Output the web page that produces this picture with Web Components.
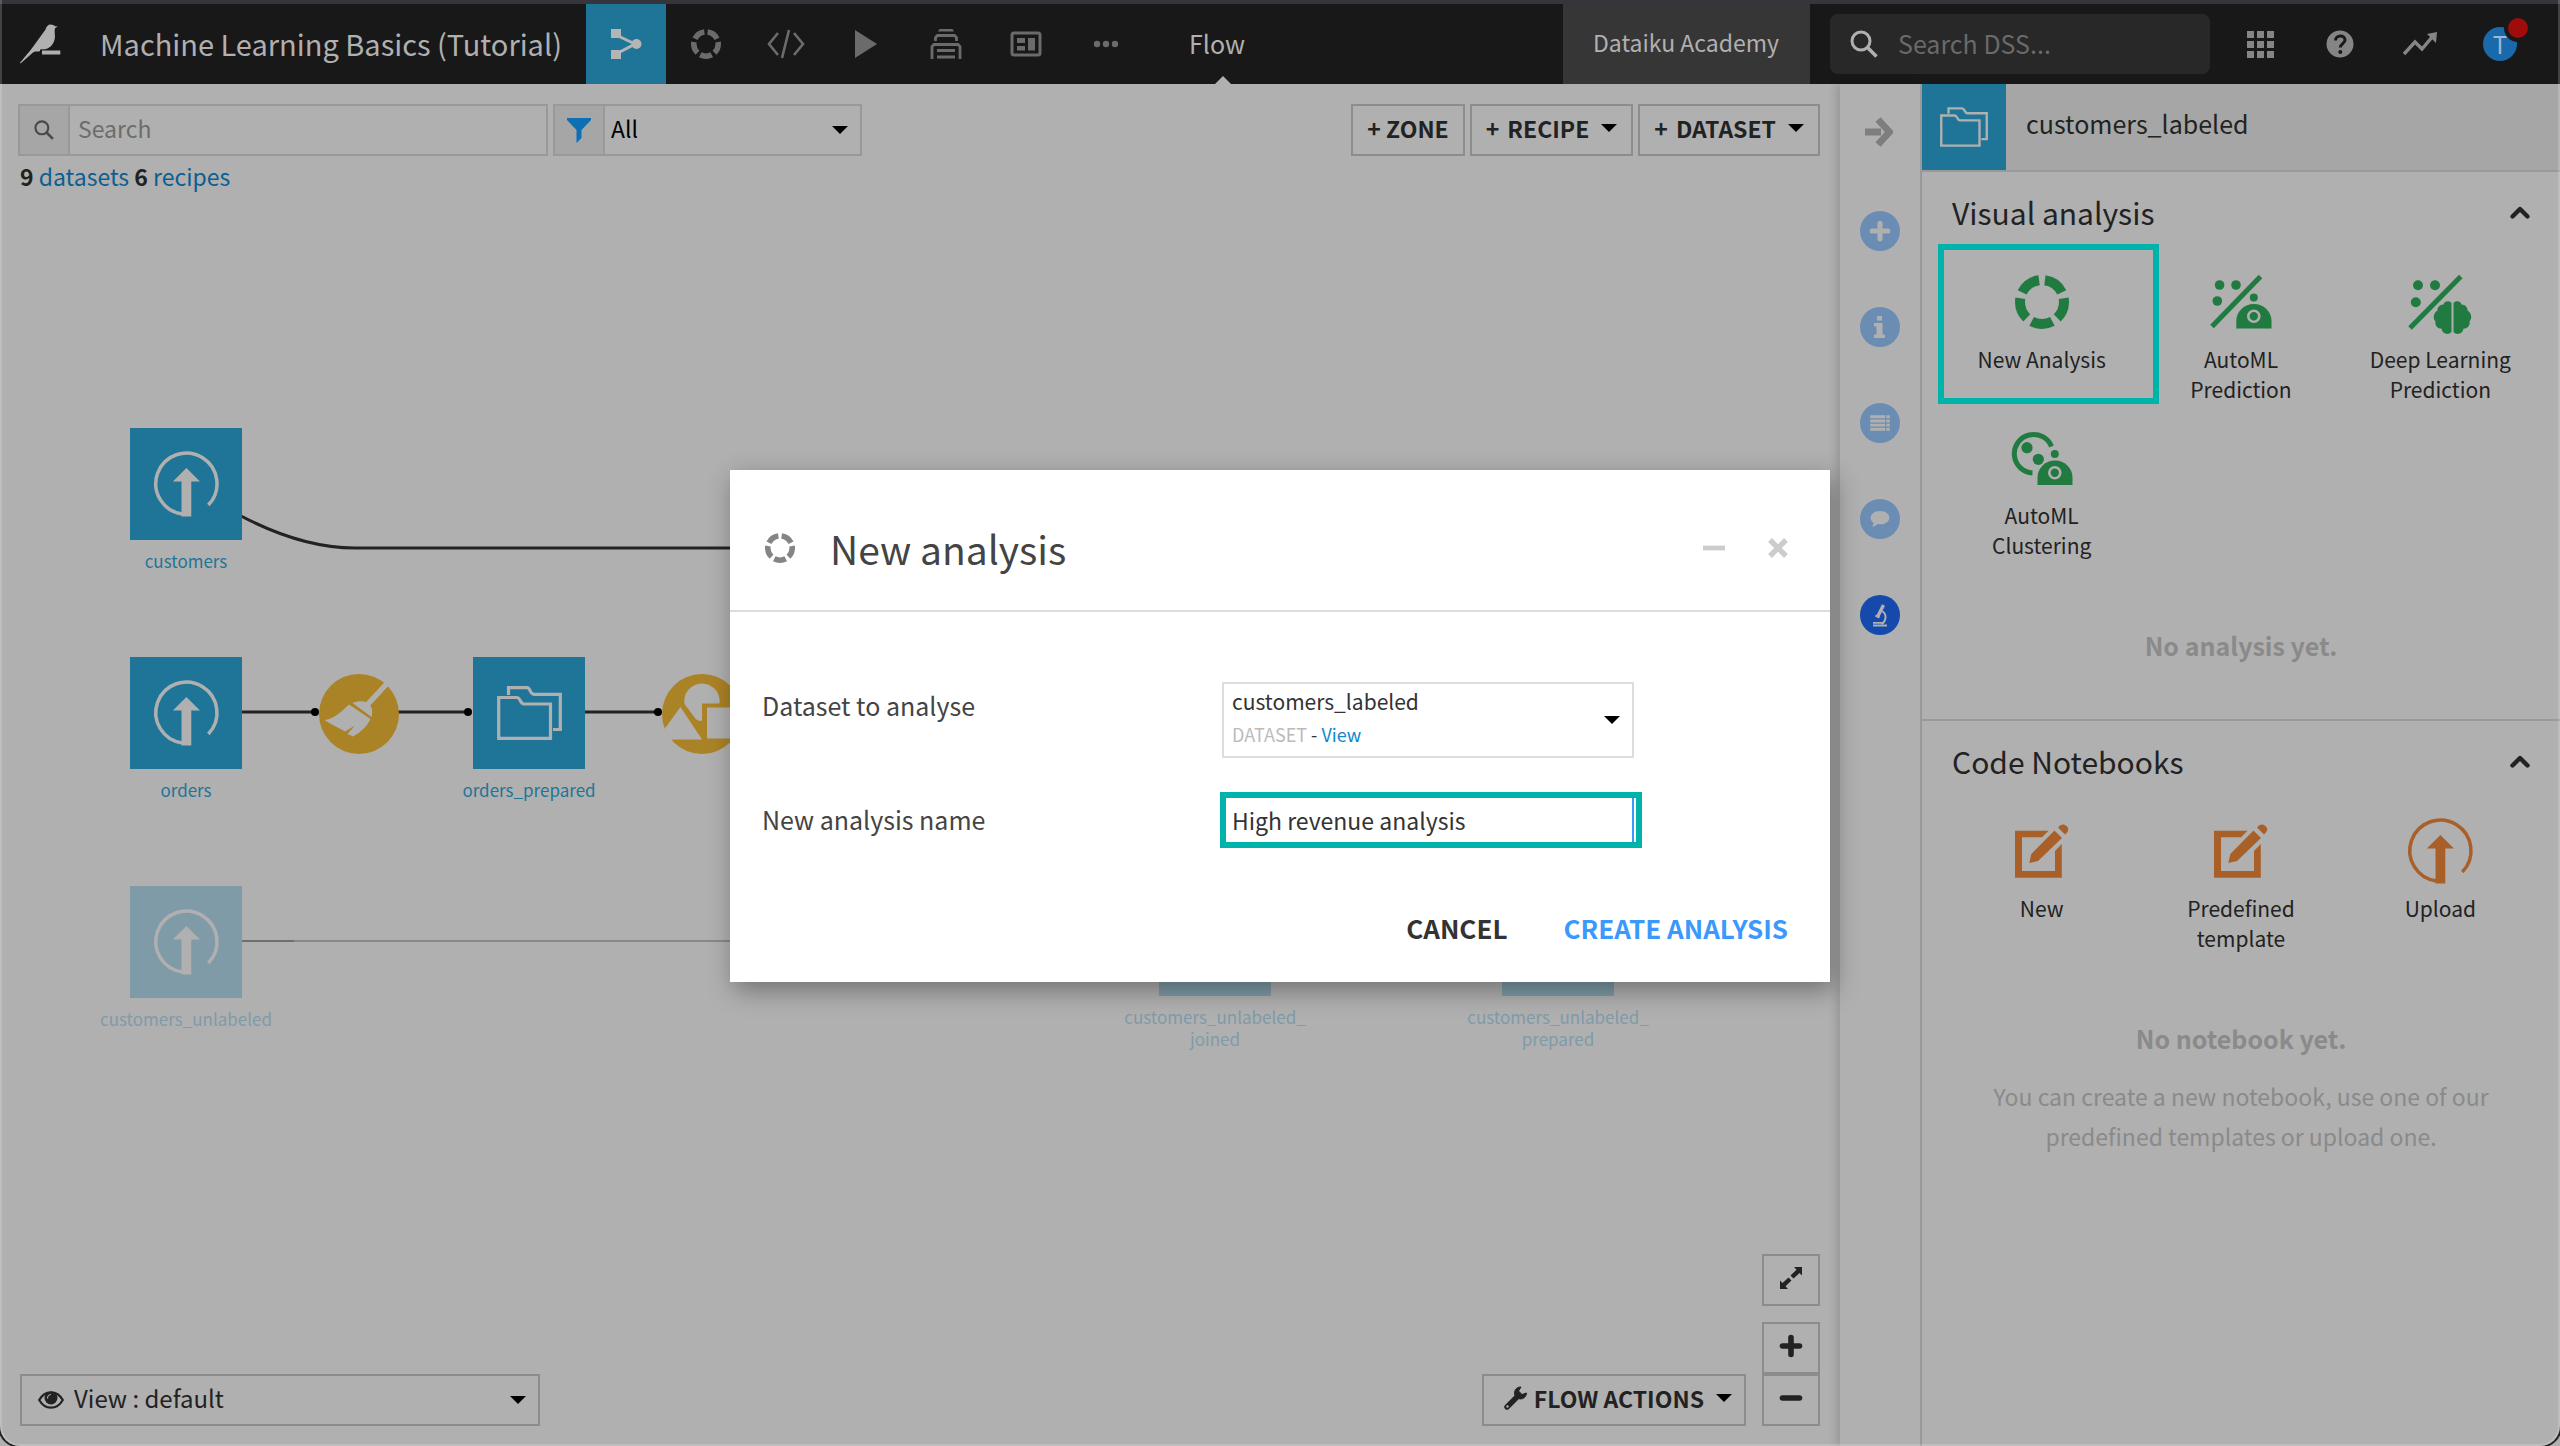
<!DOCTYPE html>
<html lang="en">
<head>
<meta charset="utf-8">
<title>Machine Learning Basics (Tutorial) - Flow</title>
<style>
html, body { margin: 0; height: 100%; background: #b0b0b0; }
body { font-family: "Noto Sans CJK SC", "Noto Sans", sans-serif; color: #222; overflow: hidden; }
</style>
</head>
<body>
<dss-app></dss-app>
<script>
const RESET = `
*, *::before, *::after { box-sizing: border-box; }
button, input, select { font: inherit; color: inherit; background: none; border: 0; margin: 0; padding: 0; border-radius: 0; outline: none; }
button { cursor: pointer; }
select { appearance: none; }
a { color: inherit; text-decoration: none; }
h1, h2, h3, p { margin: 0; font-size: inherit; font-weight: 400; }
`;
function define(name, css, html) {
  const tpl = document.createElement('template');
  tpl.innerHTML = `<style>${RESET}${css}</style>${html}`;
  customElements.define(name, class extends HTMLElement {
    constructor() {
      super();
      this.attachShadow({ mode: 'open' }).append(tpl.content.cloneNode(true));
    }
  });
}

/* name: [viewBox width, viewBox height, markup] */
const ICONS = {
  bird: [40, 40, '<path fill="currentColor" d="M30.500.500c2.300 0 3.600.8 4.500 1.700L37.800 2.500 35 4.200C33.800 8 36.500 13 33.500 18.500 31.500 22.500 28 25.200 23.500 25.300L20 25.500V27.300C17 27.500 14.500 27.500 13 28.500L.500 39.500 0 38.800C4 33.500 9 28.500 12.500 23.500L25.500 5.500C26.300 2.500 28 .500 30.500.500zM22 26.500H40.300V30.500H22z"/>'],
  flow: [32, 32, '<path d="M6 7L25 16L6 26" fill="none" stroke="currentColor" stroke-width="3"/><path fill="currentColor" d="M1 1h10v9H1zM1 22h10v9H1z"/><circle cx="26.500" cy="16" r="5" fill="currentColor"/>'],
  ring: [54, 54, '<circle cx="27" cy="27" r="22" fill="none" stroke="currentColor" stroke-width="10" pathLength="100" stroke-dasharray="15.600 4.400" stroke-dashoffset="-2.200" transform="rotate(-90 27 27)"/>'],
  code: [38, 30, '<path d="M11 4L2 15l9 11M27 4l9 11-9 11M22 1l-7 28" fill="none" stroke="currentColor" stroke-width="2.600"/>'],
  play: [24, 28, '<path d="M1 0L23 14L1 28z" fill="currentColor"/>'],
  jobs: [32, 32, '<path d="M8 3.500L9.500 1h13L24 3.500z" fill="currentColor"/><path d="M5.500 13V9.500L7.500 7.500h17l2 2V13M2 31V18.500L4 16.500h24l2 2V31" fill="none" stroke="currentColor" stroke-width="2.800"/><path d="M7 22.500h18M7 29h18" stroke="currentColor" stroke-width="3"/>'],
  dash: [32, 26, '<rect x="2" y="2" width="28" height="22" rx="2" fill="none" stroke="currentColor" stroke-width="3"/><path fill="currentColor" d="M7 7h8v5H7zM7 15h8v4.500H7zM18 7h7v12.500h-7z"/>'],
  dots: [26, 8, '<g fill="currentColor"><circle cx="4" cy="4" r="3.200"/><circle cx="13" cy="4" r="3.200"/><circle cx="22" cy="4" r="3.200"/></g>'],
  search: [28, 28, '<circle cx="11" cy="11" r="9" fill="none" stroke="currentColor" stroke-width="3"/><path d="M17.500 17.500L26.500 26.500" stroke="currentColor" stroke-width="3.600"/>'],
  grid: [27, 27, '<path fill="currentColor" d="M0 0h7v7H0zM10 0h7v7h-7zM20 0h7v7h-7zM0 10h7v7H0zM10 10h7v7h-7zM20 10h7v7h-7zM0 20h7v7H0zM10 20h7v7h-7zM20 20h7v7h-7z"/>'],
  help: [28, 28, '<circle cx="14" cy="14" r="13.500" fill="currentColor"/><path d="M9.500 10.500c0-6 9.500-6 9.500-.5 0 3.500-4.700 3.700-4.700 7.500" fill="none" stroke="#181818" stroke-width="3"/><circle cx="14.300" cy="22" r="2" fill="#181818"/>'],
  trend: [36, 26, '<path d="M2 23L13 11L20 18L31 5" fill="none" stroke="currentColor" stroke-width="3.400"/><path d="M25 3L35 1L34 12z" fill="currentColor"/>'],
  filter: [24, 26, '<path d="M0 1h24v2L14.500 13v8L9.500 26V13L0 3z" fill="currentColor"/>'],
  caret: [16, 8, '<path d="M0 0h16L8 8z" fill="currentColor"/>'],
  arrow: [30, 32, '<path d="M0 12.500H16V19.500H0z" fill="currentColor"/><path d="M13 3.500L24.500 16L13 28.500" fill="none" stroke="currentColor" stroke-width="7" stroke-linejoin="round"/>'],
  chevron: [20, 14, '<path d="M2.500 11.500L10 4L17.500 11.500" fill="none" stroke="currentColor" stroke-width="4.400" stroke-linecap="round" stroke-linejoin="round"/>'],
  plus: [22, 22, '<path d="M11 2.500V19.500M2.500 11H19.500" stroke="currentColor" stroke-width="5.600" stroke-linecap="round"/>'],
  minus: [22, 22, '<path d="M2.500 11H19.500" stroke="currentColor" stroke-width="5.600" stroke-linecap="round"/>'],
  thinminus: [22, 22, '<path d="M0 11H22" stroke="currentColor" stroke-width="4.800"/>'],
  cross: [22, 22, '<path d="M3 3L19 19M19 3L3 19" stroke="currentColor" stroke-width="5.400"/>'],
  info: [12, 22, '<path fill="currentColor" d="M3 0h5v4.500H3zM0 7h8.500v11.500H11V22H0v-3.500h2.500v-8H0z"/>'],
  list: [22, 18, '<path d="M0 2h22M0 6.700h22M0 11.400h22M0 16h22" stroke="currentColor" stroke-width="3.200"/><path d="M17.500 0v18" stroke="#6c8db3" stroke-width="1.200"/>'],
  chat: [22, 18, '<path fill="currentColor" d="M11 0c6 0 10.500 3.200 10.500 7.500S17 15 11 15c-1 0-2-.1-3-.3C6 16.800 4.500 17.500 2 18c1.200-1.500 1.700-3 1.500-5C1.500 11.500.5 9.700.5 7.500.5 3.200 5 0 11 0z"/>'],
  scope: [16, 24, '<path d="M11.500 2L5.500 14" stroke="currentColor" stroke-width="3.400"/><path d="M3.500 12.500l4 2M10 8c5 3 4.500 10-.5 13" fill="none" stroke="currentColor" stroke-width="2"/><path d="M1 19.800h11M1 22.500h14" stroke="currentColor" stroke-width="1.800"/>'],
  upload: [65, 66, '<path d="M54.300 54A30.600 30.600 0 1 0 28.500 63" fill="none" stroke="currentColor" stroke-width="3.500"/><path fill="currentColor" d="M32.400 17L46 30.500H37.300V65.500H27.500V30.500H18.800z"/>'],
  folders: [65, 54, '<path d="M1.700 11.500H20c3.500 0 3 6.500 7 6.500H53.500V52.300H1.700zM11.500 9V1.700H30c3.500 0 3 6.500 7 6.700H63.300V43.500H56" fill="none" stroke="currentColor" stroke-width="3.200"/>'],
  broom: [80, 80, '<circle cx="40" cy="40" r="40" fill="var(--disc)"/><path d="M68.500 9L49 30" stroke="var(--cut)" stroke-width="5.500"/><path fill="var(--cut)" d="M33.500 29c5-2.500 13-2.500 16.500.5 3 3 4 8.500 2.500 13.500zM5.500 46C14 45.500 21 39 30 30.500L51.500 45C48 52 43 57.500 34 62.500L28.500 60L36 51.500L26 57.500C18 53 11 50 5.500 46z"/>'],
  shapes: [80, 80, '<circle cx="40" cy="40" r="40" fill="var(--disc)"/><path fill="var(--cut)" d="M22.500 30a17.700 17.700 0 1 1 35-.500H40V47c-4 0-5.500-1-7-3zM18.500 33L40 65.500H8L2.500 55zM45 33.500H80V64.500H45z"/>'],
  pred: [62, 54, '<g fill="currentColor"><circle cx="9.600" cy="10" r="4.800"/><circle cx="26" cy="10" r="4.800"/><circle cx="7.300" cy="26" r="4.800"/><circle cx="43.800" cy="22.500" r="4"/><path d="M26.300 53.500V46a17.600 17 0 0 1 35.200 0V53.500z"/></g><path d="M50.500 1.500L2 51.500" stroke="currentColor" stroke-width="5"/><circle cx="43.800" cy="41.200" r="5.500" fill="none" stroke="#b0b0b0" stroke-width="2.600"/>'],
  deep: [64, 54, '<g fill="currentColor"><circle cx="10" cy="10.300" r="5"/><circle cx="27" cy="10.300" r="5"/><circle cx="7.800" cy="27.300" r="5"/><path d="M43.500 28c-2-3-7.500-2-8 1.500-3.500 0-6.500 3-6 6-4 2.500-5 8-2 11-1 4 2.500 7.500 6 7 .5 5.500 7 7 10 3.500zM45.500 28c2-3 7.500-2 8 1.500 3.500 0 6.500 3 6 6 4 2.500 5 8 2 11 1 4-2.500 7.500-6 7-.5 5.500-7 7-10 3.500z"/></g><path d="M52.800 1.500L2 53" stroke="currentColor" stroke-width="5"/>'],
  cluster: [62, 54, '<path d="M40.500 15.500A19.300 19.300 0 1 0 21.500 42" fill="none" stroke="currentColor" stroke-width="5"/><g fill="currentColor"><circle cx="16" cy="16.700" r="5.600"/><circle cx="27.300" cy="28.300" r="5.600"/><circle cx="43.800" cy="23" r="4"/><path d="M26.500 54V46.500a17.500 17 0 0 1 35 0V54z"/></g><circle cx="43.800" cy="41.800" r="5.500" fill="none" stroke="#b0b0b0" stroke-width="2.600"/>'],
  edit: [54, 54, '<path fill="currentColor" d="M0 6.700H33.500L27 13.300H7V47H40V27L46.800 20V53.700H0zM39.500 6.500L47 14L23 37L14.300 39L16.300 30zM43 3.500c2.500-3.500 6-4 8.500-1.500s2.500 5-1.500 8.500z"/>'],
  expand: [24, 24, '<path fill="currentColor" d="M23 1V9.500L20.500 7L14.500 12.500L11.500 9.500L17.500 3.700L15 1zM1 23V14.500L3.500 17L9.500 11.500L12.500 14.500L6.500 20.300L9 23z"/>'],
  wrench: [24, 24, '<path d="M3 21L13.500 10.500" stroke="currentColor" stroke-width="5.400" stroke-linecap="round"/><path d="M22.500 7a6 6 0 1 1-5.500-6L14.500 5l3.500 3.500z" fill="currentColor" stroke="currentColor" stroke-width="1"/><circle cx="3.500" cy="20.500" r="1.200" fill="#b0b0b0"/>'],
  eye: [26, 20, '<path d="M1.200 10C7-.2 19-.2 24.800 10 19 20.200 7 20.200 1.200 10z" fill="none" stroke="currentColor" stroke-width="2.200"/><circle cx="13" cy="8" r="6.500" fill="currentColor"/><path d="M9.500 8.500a3.800 3.800 0 0 1 3.500-4" fill="none" stroke="#b0b0b0" stroke-width="1.200"/>']
};
customElements.define('dss-icon', class extends HTMLElement {
  connectedCallback() {
    if (this.shadowRoot) return;
    const [w, h, body] = ICONS[this.getAttribute('name')];
    const size = +this.getAttribute('w') || w;
    this.attachShadow({ mode: 'open' }).innerHTML =
      `<style>:host{display:inline-flex;flex:none}svg{display:block;overflow:visible}</style>
       <svg width="${size}" height="${Math.round(size * h / w)}" viewBox="0 0 ${w} ${h}" aria-hidden="true">${body}</svg>`;
  }
});

define('dss-tab', `
:host { display: flex; width: 80px; color: #6b6b6b; }
:host([active]) { background: #1f7598; color: #b5b5b5; }
button { flex: 1; display: flex; align-items: center; justify-content: center; }
`, `<button><slot></slot></button>`);

define('dss-topbar', `
:host { display: flex; align-items: stretch; height: 84px; background: #181818; border-top: 4px solid #35353c; color: #b0b0b0; flex: none; }
.logo { display: flex; align-items: center; padding: 0 40px 0 20px; }
h1 { font-size: 29px; line-height: 78px; width: 486px; white-space: nowrap; }
nav { display: flex; }
.here { position: relative; font-size: 25px; line-height: 78px; padding: 0 54px 0 43px; }
.here::after { content: ""; position: absolute; left: calc(50% - 8px); bottom: 0; border: 8px solid transparent; border-top: 0; border-bottom-color: #b0b0b0; }
.space { flex: 1; }
.academy { background: #363636; padding: 0 31px 0 30px; line-height: 76px; font-size: 23px; }
.find { display: flex; align-items: center; gap: 20px; width: 380px; height: 60px; margin: 10px 10px 10px 20px; padding: 0 20px; border-radius: 8px; background: #282828; }
.find input { flex: 1; min-width: 0; font-size: 25px; line-height: 40px; padding-bottom: 2px; }
.find input::placeholder { color: #6a6a6a; opacity: 1; }
.tools { display: flex; color: #858585; margin-right: 20px; }
.tools button { width: 80px; display: flex; align-items: center; justify-content: center; position: relative; }
.face { width: 34px; height: 34px; border-radius: 50%; background: #1a69aa; color: #9db8d0; font-size: 24px; line-height: 34px; text-align: center; }
.face::after { content: ""; position: absolute; width: 20px; height: 20px; right: 12px; top: 14px; border-radius: 50%; background: #a00b0b; box-shadow: 0 0 0 4px #181818; }
`, `
<a class="logo" href="#" aria-label="Home"><dss-icon name="bird"></dss-icon></a>
<h1>Machine Learning Basics (Tutorial)</h1>
<nav>
<dss-tab active><dss-icon name="flow"></dss-icon></dss-tab>
<dss-tab><dss-icon name="ring" w="30"></dss-icon></dss-tab>
<dss-tab><dss-icon name="code"></dss-icon></dss-tab>
<dss-tab><dss-icon name="play"></dss-icon></dss-tab>
<dss-tab><dss-icon name="jobs"></dss-icon></dss-tab>
<dss-tab><dss-icon name="dash"></dss-icon></dss-tab>
<dss-tab><dss-icon name="dots"></dss-icon></dss-tab>
</nav>
<div class="here">Flow</div>
<div class="space"></div>
<a class="academy" href="#">Dataiku Academy</a>
<label class="find"><dss-icon name="search"></dss-icon><input type="text" placeholder="Search DSS..." aria-label="Search DSS"></label>
<div class="tools">
<button aria-label="Apps"><dss-icon name="grid"></dss-icon></button>
<button aria-label="Help"><dss-icon name="help"></dss-icon></button>
<button aria-label="Activity"><dss-icon name="trend"></dss-icon></button>
<button aria-label="Profile"><span class="face">T</span></button>
</div>`);

define('dss-field', `
:host { display: flex; height: 52px; border: 2px solid #999; font-size: 23px; color: #000; }
.tag { width: 50px; flex: none; display: flex; align-items: center; justify-content: center; background: #a6a6a6; border-right: 2px solid #999; color: var(--tag, #4a4a4a); }
slot:not([name]) { display: flex; flex: 1; align-items: center; }
`, `<span class="tag"><slot name="tag"></slot></span><slot></slot>`);

define('dss-button', `
:host { display: flex; }
button { display: flex; align-items: center; justify-content: var(--justify, center); gap: 12px; flex: 1; height: 52px; padding: 0 var(--pad, 14px) 4px; border: 2px solid #8c8c8c; font-size: 23px; font-weight: 700; line-height: 40px; color: #222; white-space: nowrap; }
`, `<button><slot></slot></button>`);

define('flow-toolbar', `
:host { display: block; padding: 20px 20px 0 18px; }
.row { display: flex; gap: 5px; }
.row > :nth-child(1) { width: 530px; }
.row > :nth-child(2) { width: 309px; --tag: #0f6fb5; }
.space { flex: 1; }
input { flex: 1; min-width: 0; padding: 0 8px 4px; line-height: 40px; }
input::placeholder { color: #6c6c6c; opacity: 1; }
select { flex: 1; padding: 0 6px 4px; line-height: 40px; }
.filter dss-icon:last-child { margin-right: 12px; }
.add { display: flex; gap: 8px; }
dss-button dss-icon { color: #000; }
p { font-size: 23px; line-height: 36px; padding: 2px 2px 6px; }
a { color: #0c5f92; }
b { font-weight: 700; }
`, `
<div class="row">
<dss-field><dss-icon slot="tag" name="search" w="20"></dss-icon><input type="text" placeholder="Search" aria-label="Search flow"></dss-field>
<dss-field class="filter"><dss-icon slot="tag" name="filter"></dss-icon><select aria-label="Filter"><option>All</option></select><dss-icon name="caret"></dss-icon></dss-field>
<span class="space"></span>
<dss-button>+ ZONE</dss-button>
<dss-button><span class="add"><span>+ </span><span>RECIPE</span></span><dss-icon name="caret"></dss-icon></dss-button>
<dss-button><span class="add"><span>+ </span><span>DATASET</span></span><dss-icon name="caret"></dss-icon></dss-button>
</div>
<p><b>9</b> <a href="#">datasets</a> <b>6</b> <a href="#">recipes</a></p>`);

define('flow-node', `
:host { position: absolute; left: var(--x); top: var(--y); width: 112px; display: flex; flex-direction: column; align-items: center; color: #1f7598; font-size: 17px; line-height: 22px; text-align: center; }
:host([faded]) { color: #7f9ba8; }
.tile { width: 112px; height: 112px; display: flex; align-items: center; justify-content: center; background: currentColor; }
.tile ::slotted(*) { color: #b0b0b0; }
.name { margin-top: 10px; white-space: nowrap; }
`, `<div class="tile"><slot name="icon"></slot></div><span class="name"><slot></slot></span>`);

define('flow-canvas', `
:host { display: block; position: relative; flex: 1; }
.edges { position: absolute; left: 0; top: 0; overflow: visible; }
.recipe { position: absolute; left: var(--x); top: var(--y); --disc: #ab8327; --cut: #b0b0b0; }
.recipe.faded { opacity: .4; }
`, `
<svg class="edges" width="1" height="1" aria-hidden="true">
<g fill="none" stroke="#222" stroke-width="3"><path d="M241 316Q302 348 355 348H1200"/><path d="M241 512H315M398 512H468M584 512H658"/></g>
<g><circle cx="315" cy="512" r="4"/><circle cx="468" cy="512" r="4"/><circle cx="658" cy="512" r="4"/></g>
<path d="M241 741H1200" stroke="#888" stroke-width="2"/><path d="M241 741H294" stroke="#6f6f6f" stroke-width="2"/>
</svg>
<flow-node style="--x:130px;--y:228px"><dss-icon slot="icon" name="upload"></dss-icon>customers</flow-node>
<flow-node style="--x:130px;--y:457px"><dss-icon slot="icon" name="upload"></dss-icon>orders</flow-node>
<flow-node style="--x:130px;--y:686px" faded><dss-icon slot="icon" name="upload"></dss-icon>customers_unlabeled</flow-node>
<flow-node style="--x:473px;--y:457px"><dss-icon slot="icon" name="folders"></dss-icon>orders_prepared</flow-node>
<flow-node style="--x:1159px;--y:684px" faded><dss-icon slot="icon" name="folders"></dss-icon>customers_unlabeled_<br>joined</flow-node>
<flow-node style="--x:1502px;--y:684px" faded><dss-icon slot="icon" name="folders"></dss-icon>customers_unlabeled_<br>prepared</flow-node>
<dss-icon class="recipe" style="--x:319px;--y:474px" name="broom"></dss-icon>
<dss-icon class="recipe" style="--x:662px;--y:474px" name="shapes"></dss-icon>
<dss-icon class="recipe faded" style="--x:1004px;--y:702px" name="broom"></dss-icon>
<dss-icon class="recipe faded" style="--x:1347px;--y:702px" name="broom"></dss-icon>`);

define('flow-footer', `
:host { display: flex; align-items: flex-end; gap: 16px; padding: 0 20px; margin-bottom: 20px; }
.view { display: flex; align-items: center; gap: 10px; width: 520px; height: 52px; border: 2px solid #8c8c8c; padding: 0 12px 0 16px; font-size: 24px; }
.view select { flex: 1; line-height: 40px; padding-bottom: 4px; color: #222; }
.view dss-icon:last-child, .act dss-icon:last-child { color: #000; }
.space { flex: 1; }
.act { width: 264px; --justify: flex-end; --pad: 12px; }
.lead { display: flex; align-items: center; gap: 6px; }
.zoom { display: flex; flex-direction: column; width: 58px; --pad: 0px; }
.zoom > :first-child { margin-bottom: 16px; }
`, `
<label class="view"><dss-icon name="eye"></dss-icon><select aria-label="View"><option>View : default</option></select><dss-icon name="caret"></dss-icon></label>
<span class="space"></span>
<dss-button class="act"><span class="lead"><dss-icon name="wrench"></dss-icon><span>FLOW ACTIONS</span></span><dss-icon name="caret"></dss-icon></dss-button>
<div class="zoom">
<dss-button><dss-icon name="expand"></dss-icon></dss-button>
<dss-button><dss-icon name="plus"></dss-icon></dss-button>
<dss-button><dss-icon name="minus"></dss-icon></dss-button>
</div>`);

define('side-rail', `
:host { display: flex; flex-direction: column; align-items: center; width: 80px; flex: none; padding-top: 32px; box-shadow: -4px 0 8px rgba(0,0,0,.14); background: #b0b0b0; }
button { display: flex; align-items: center; justify-content: center; width: 40px; height: 40px; border-radius: 50%; background: #6c8db3; color: #b0b0b0; margin-bottom: 56px; }
.fold { width: auto; height: 32px; background: none; color: #7e7e7e; margin-bottom: 63px; }
.on { background: #1549ab; }
`, `
<button aria-label="Collapse" class="fold"><dss-icon name="arrow"></dss-icon></button>
<button aria-label="Actions"><dss-icon name="plus" w="20"></dss-icon></button>
<button aria-label="Details"><dss-icon name="info"></dss-icon></button>
<button aria-label="Schema"><dss-icon name="list" w="20"></dss-icon></button>
<button aria-label="Discussions"><dss-icon name="chat" w="20"></dss-icon></button>
<button aria-label="Lab" class="on"><dss-icon name="scope"></dss-icon></button>`);

define('action-tile', `
:host { display: block; position: relative; }
button { display: flex; flex-direction: column; align-items: center; gap: 14px; width: 100%; min-height: 156px; padding-top: 26px; font-size: 21px; line-height: 30px; }
.pic { height: 56px; display: flex; align-items: center; color: var(--tint); }
:host([marked])::after { content: ""; position: absolute; inset: -4px -18px 0 -4px; border: 6px solid #00b3aa; pointer-events: none; }
`, `<button><span class="pic"><slot name="icon"></slot></span><span><slot></slot></span></button>`);

define('panel-section', `
:host { display: block; padding-bottom: 53px; }
header { display: flex; align-items: center; justify-content: space-between; padding: 20px 30px 16px 30px; }
h2 { font-size: 30px; line-height: 40px; }
.tiles { display: grid; grid-template-columns: repeat(3, 1fr); padding: 0 20px; }
.empty { margin-top: 65px; padding: 0 60px; text-align: center; color: #8a8a8a; font-size: 23px; line-height: 40px; }
`, `
<header><h2><slot name="title"></slot></h2><button aria-label="Fold"><dss-icon name="chevron"></dss-icon></button></header>
<div class="tiles"><slot></slot></div>
<div class="empty"><slot name="empty"></slot></div>`);

define('side-panel', `
:host { display: block; width: 640px; flex: none; border-left: 2px solid #999; }
.head { display: flex; height: 88px; background: #a6a6a6; border-bottom: 2px solid #999; font-size: 25px; line-height: 78px; }
.head span { display: flex; align-items: center; justify-content: center; width: 84px; margin-right: 20px; background: #1f7598; color: #b0b0b0; }
panel-section + panel-section { border-top: 2px solid #999; }
b { font-size: 25px; }
p { margin-top: 17px; }
`, `
<div class="head"><span><dss-icon name="folders" w="48"></dss-icon></span><h2>customers_labeled</h2></div>
<panel-section style="--tint:#217a40">
<span slot="title">Visual analysis</span>
<action-tile marked><dss-icon slot="icon" name="ring"></dss-icon>New Analysis</action-tile>
<action-tile><dss-icon slot="icon" name="pred"></dss-icon>AutoML<br>Prediction</action-tile>
<action-tile><dss-icon slot="icon" name="deep"></dss-icon>Deep Learning<br>Prediction</action-tile>
<action-tile><dss-icon slot="icon" name="cluster"></dss-icon>AutoML<br>Clustering</action-tile>
<b slot="empty">No analysis yet.</b>
</panel-section>
<panel-section style="--tint:#a96028">
<span slot="title">Code Notebooks</span>
<action-tile><dss-icon slot="icon" name="edit"></dss-icon>New</action-tile>
<action-tile><dss-icon slot="icon" name="edit"></dss-icon>Predefined<br>template</action-tile>
<action-tile><dss-icon slot="icon" name="upload"></dss-icon>Upload</action-tile>
<b slot="empty">No notebook yet.</b>
<p slot="empty">You can create a new notebook, use one of our predefined templates or upload one.</p>
</panel-section>`);

define('analysis-modal', `
:host { position: absolute; inset: 6px 0 0; display: grid; place-items: center; }
section { width: 1100px; background: #fff; color: #333; box-shadow: 4px 8px 24px rgba(0,0,0,.36); }
header { display: flex; align-items: center; height: 142px; padding: 15px 41px 0 35px; border-bottom: 2px solid #ddd; color: #858585; }
header h2 { flex: 1; margin-left: 35px; font-size: 39px; line-height: 60px; color: #444; }
header button { color: #ccc; display: flex; margin-left: 42px; }
form { padding: 70px 32px 34px; display: grid; grid-template-columns: 458px 1fr; row-gap: 34px; }
form > label { font-size: 25px; line-height: 36px; color: #444; padding-top: 5px; }
form > .second { padding-top: 9px; }
.pick { display: flex; align-items: center; justify-content: space-between; width: 412px; height: 76px; margin-left: 2px; border: 2px solid #ddd; padding: 0 12px 0 8px; }
.pick div { padding-bottom: 6px; }
.pick select { display: block; font-size: 21px; line-height: 34px; height: 34px; width: 340px; }
.pick small { display: block; font-size: 18px; line-height: 32px; }
.pick i { font-style: normal; color: #bbb; }
.pick a { color: #0d87cf; }
.pick dss-icon { color: #000; }
.name { width: 422px; height: 56px; border: 6px solid #00b3aa; padding-right: 2px; display: flex; }
.name input { flex: 1; padding: 0 6px; font-size: 23px; border-right: 2px solid #3b99fc; }
footer { grid-column: 1 / -1; display: flex; justify-content: flex-end; gap: 56px; margin-top: 26px; padding-right: 10px; font-size: 26px; line-height: 40px; font-weight: 700; }
footer button:last-child { color: #3b99fc; }
`, `
<section role="dialog" aria-label="New analysis">
<header><dss-icon name="ring" w="30"></dss-icon><h2>New analysis</h2>
<button aria-label="Minimize"><dss-icon name="thinminus"></dss-icon></button>
<button aria-label="Close"><dss-icon name="cross"></dss-icon></button></header>
<form>
<label for="ds">Dataset to analyse</label>
<div class="pick"><div><select id="ds"><option>customers_labeled</option></select><small><i>DATASET</i> - <a href="#">View</a></small></div><dss-icon name="caret"></dss-icon></div>
<label class="second" for="nm">New analysis name</label>
<div class="name"><input id="nm" type="text" value="High revenue analysis"></div>
<footer><button type="button">CANCEL</button><button type="button">CREATE ANALYSIS</button></footer>
</form>
</section>`);

define('dss-app', `
:host { display: flex; flex-direction: column; position: relative; min-height: 100vh; overflow: hidden; background: #b0b0b0; }
:host::after { content: ""; position: absolute; inset: 0; border: 2px solid rgba(255,255,255,.18); border-top: 0; border-radius: 0 0 20px 20px; box-shadow: 0 0 0 2px #222; pointer-events: none; }
.body { flex: 1; display: flex; }
main { flex: 1; min-width: 0; display: flex; flex-direction: column; }
`, `
<dss-topbar></dss-topbar>
<div class="body">
<main><flow-toolbar></flow-toolbar><flow-canvas></flow-canvas><flow-footer></flow-footer></main>
<side-rail></side-rail>
<side-panel></side-panel>
</div>
<analysis-modal></analysis-modal>`);
</script>
</body>
</html>
